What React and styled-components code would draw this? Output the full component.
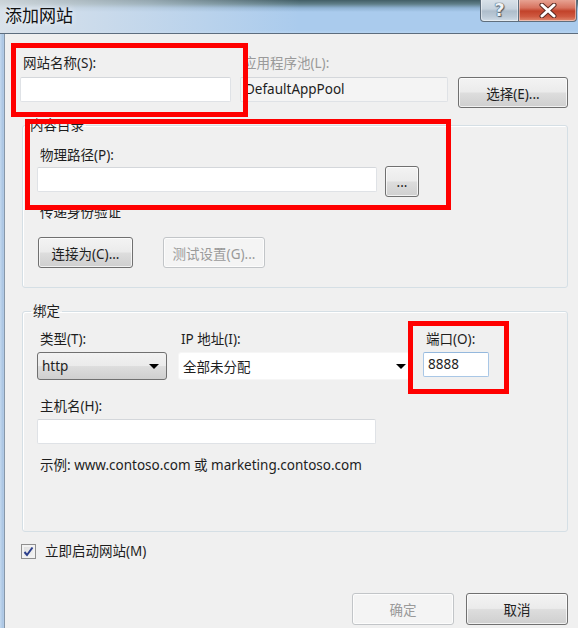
import React from 'react';
import styled, { createGlobalStyle } from 'styled-components';

const GlobalStyle = createGlobalStyle`
  html, body {
    margin: 0;
    padding: 0;
    background: #b4cde8;
    overflow: hidden;
  }
  * { box-sizing: border-box; }
`;

const Window = styled.div`
  position: relative;
  width: 578px;
  height: 628px;
  overflow: hidden;
  background: linear-gradient(90deg, #c3d8ee 0, #a9c4e2 3px, #b9d0ea 4px);
  font-family: "Noto Sans", "Noto Sans CJK SC", sans-serif;
  font-size: 13.5px;
  color: #1e1e1e;
`;

const TitleBar = styled.div`
  height: 34px;
  display: flex;
  align-items: flex-start;
  border-bottom: 1px solid #5d6d7e;
  background:
    linear-gradient(90deg, rgba(226, 230, 234, 0.85) 0, rgba(214, 224, 234, 0.55) 150px, rgba(200, 220, 240, 0) 300px),
    linear-gradient(180deg, #425e66 0, #5f7e88 4px, #8fb2d2 8px, #aacbed 12px, #aacbed 30px, #b6d3f0 33px);
`;

const Title = styled.div`
  font-family: "Noto Sans CJK SC", sans-serif;
  font-size: 17px;
  line-height: 20px;
  padding: 5px 0 0 5px;
  color: #111;
  text-shadow: 0 0 6px rgba(255, 255, 255, 0.9);
`;

const Caption = styled.div`
  margin-left: auto;
  margin-right: 1px;
  display: flex;
`;

const CapButton = styled.div`
  width: ${p => p.$w}px;
  height: 23px;
  margin-top: -1px;
  display: flex;
  align-items: center;
  justify-content: center;
  border: 1px solid #5f6e7d;
  border-top: none;
  border-radius: ${p => (p.$close ? '0 0 4px 0' : '0 0 0 4px')};
  background: ${p =>
    p.$close
      ? 'linear-gradient(180deg, #e9a898 0, #d7735f 40%, #c2422a 55%, #cf5a41 80%, #e08a70 100%)'
      : 'linear-gradient(180deg, #dbe3ea 0, #c6d2dd 45%, #aebdcb 55%, #bccad7 80%, #d0dce7 100%)'};
  box-shadow: inset 0 0 0 1px rgba(255, 255, 255, 0.45);
  & + & { border-left: none; }
`;

const HelpGlyph = styled.span`
  font-family: "DejaVu Sans", sans-serif;
  font-weight: bold;
  font-size: 18px;
  line-height: 1;
  color: #eef2f5;
  text-shadow: 0 0 1px #3b4652, 0 0 1px #3b4652, 1px 1px 1px #55606b;
`;

const Client = styled.div`
  margin-left: 4px;
  height: 594px;
  border-left: 1px solid #8797a8;
  background: #f0f0f0;
  padding: 22px 10px 0 15px;
`;

const Row = styled.div`
  display: flex;
  align-items: ${p => p.$align || 'flex-start'};
  margin-top: ${p => p.$mt || 0}px;
  margin-left: ${p => p.$ml || 0}px;
  gap: ${p => p.$gap || 0}px;
  justify-content: ${p => p.$justify || 'flex-start'};
`;

const Field = styled.div`
  display: flex;
  flex-direction: column;
  width: ${p => p.$w}px;
  margin-left: ${p => p.$ml || 0}px;
`;

const Label = styled.div`
  height: 14px;
  line-height: 14px;
  margin-left: 3px;
  margin-top: ${p => p.$mt || 0}px;
  margin-bottom: ${p => p.$mb || 0}px;
  white-space: nowrap;
  color: ${p => (p.$disabled ? '#9a9a9a' : '#1e1e1e')};
`;

const TextBox = styled.div`
  width: ${p => (p.$w ? `${p.$w}px` : '100%')};
  height: 25px;
  line-height: 23px;
  padding: 0 4px;
  background: ${p => (p.$disabled ? '#f4f4f4' : '#fff')};
  border: 1px solid ${p => (p.$focus ? '#a9c7e6' : '#dfe2e6')};
  border-top-color: ${p => (p.$focus ? '#94b8dd' : '#d4d7db')};
  border-radius: 2px;
  white-space: nowrap;
  overflow: hidden;
`;

const Button = styled.div`
  width: ${p => p.$w}px;
  height: ${p => p.$h || 31}px;
  margin-top: ${p => p.$mt || 0}px;
  margin-left: ${p => p.$ml || 0}px;
  display: flex;
  align-items: center;
  justify-content: center;
  flex-shrink: 0;
  border-radius: 3px;
  border: 1px solid ${p => (p.$disabled ? '#c2c5c8' : '#707070')};
  color: ${p => (p.$disabled ? '#9a9a9a' : '#1e1e1e')};
  background: ${p =>
    p.$disabled
      ? '#f4f4f4'
      : 'linear-gradient(180deg, #f3f3f3 0, #ebebeb 48%, #dddddd 52%, #cfcfcf 100%)'};
  box-shadow: inset 0 0 0 1px rgba(255, 255, 255, 0.7);
  white-space: nowrap;
`;

const Group = styled.fieldset`
  margin: ${p => p.$mt}px 0 0 2px;
  padding: ${p => p.$pt}px 14px ${p => p.$pb}px 14px;
  border: 1px solid #d5dfe5;
  border-radius: 3px;
  box-shadow: inset 1px 1px 0 #fff;
  min-width: 0;
`;

const Legend = styled.legend`
  margin-left: ${p => p.$ml}px;
  padding: 0 2px;
  height: 16px;
  line-height: 16px;
`;

const Select = styled.div`
  position: relative;
  width: ${p => p.$w}px;
  height: 28px;
  display: flex;
  align-items: center;
  padding-left: 4px;
  border-radius: 3px;
  border: 1px solid ${p => (p.$plain ? '#f6f6f6' : '#707070')};
  background: ${p =>
    p.$plain
      ? '#fff'
      : 'linear-gradient(180deg, #f2f2f2 0, #ebebeb 48%, #dddddd 52%, #cfcfcf 100%)'};
  white-space: nowrap;
`;

const Arrow = styled.span`
  position: absolute;
  right: ${p => p.$r}px;
  top: 11px;
  width: 0;
  height: 0;
  border-left: 5px solid transparent;
  border-right: 5px solid transparent;
  border-top: 5px solid #000;
`;

const CheckBox = styled.div`
  width: 15px;
  height: 15px;
  margin-left: 1px;
  border: 1px solid #8f8f8f;
  background: linear-gradient(135deg, #dcdcdc 0, #f4f4f4 100%);
  box-shadow: inset 0 0 0 2px #f2f2f2;
  display: flex;
  align-items: center;
  justify-content: center;
`;

const CheckLabel = styled.span`
  margin-left: 9px;
  line-height: 15px;
`;

const Mark = styled.div`
  position: absolute;
  left: ${p => p.$x}px;
  top: ${p => p.$y}px;
  width: ${p => p.$w}px;
  height: ${p => p.$h}px;
  border: 5px solid #ff0000;
  pointer-events: none;
`;

export default function App() {
  return (
    <Window>
      <GlobalStyle />
      <TitleBar>
        <Title>添加网站</Title>
        <Caption>
          <CapButton $w={39}>
            <HelpGlyph>?</HelpGlyph>
          </CapButton>
          <CapButton $w={58} $close>
            <svg width="18" height="15" viewBox="0 0 18 15">
              <path d="M3 2 L15 13 M15 2 L3 13" stroke="#5b2a22" strokeWidth="5" strokeLinecap="round" />
              <path d="M3 2 L15 13 M15 2 L3 13" stroke="#ffffff" strokeWidth="3" strokeLinecap="round" />
            </svg>
          </CapButton>
        </Caption>
      </TitleBar>

      <Client>
        <Row>
          <Field $w={211}>
            <Label $mb={7}>网站名称(S):</Label>
            <TextBox />
          </Field>
          <Field $w={208} $ml={9}>
            <Label $mb={7} $disabled>应用程序池(L):</Label>
            <TextBox $disabled>DefaultAppPool</TextBox>
          </Field>
          <Button $w={110} $ml={10} $mt={21}>选择(E)...</Button>
        </Row>

        <Group $mt={9} $pt={15} $pb={19}>
          <Legend $ml={-9}>内容目录</Legend>
          <Label $mb={5}>物理路径(P):</Label>
          <Row>
            <TextBox $w={340} />
            <Button $w={34} $h={31} $ml={8} $mt={-1}>...</Button>
          </Row>
          <Label $mt={8}>传递身份验证</Label>
          <Row $mt={18} $ml={1} $gap={30}>
            <Button $w={95}>连接为(C)...</Button>
            <Button $w={102} $disabled>测试设置(G)...</Button>
          </Row>
        </Group>

        <Group $mt={15} $pt={13} $pb={59}>
          <Legend $ml={-6}>绑定</Legend>
          <Row>
            <Field $w={130}>
              <Label $mb={6}>类型(T):</Label>
              <Select $w={130}>
                http
                <Arrow $r={7} />
              </Select>
            </Field>
            <Field $w={232} $ml={11}>
              <Label $mb={6}>IP 地址(I):</Label>
              <Select $w={232} $plain>
                全部未分配
                <Arrow $r={3} />
              </Select>
            </Field>
            <Field $w={66} $ml={13}>
              <Label $mb={6}>端口(O):</Label>
              <TextBox $focus>8888</TextBox>
            </Field>
          </Row>
          <Label $mt={19} $mb={6}>主机名(H):</Label>
          <TextBox $w={339} />
          <Label $mt={14}>示例: www.contoso.com 或 marketing.contoso.com</Label>
        </Group>

        <Row $mt={12} $align="center">
          <CheckBox>
            <svg width="11" height="11" viewBox="0 0 11 11">
              <path d="M1.5 6 L4 9 L9.5 1.5" fill="none" stroke="#2c3f8c" strokeWidth="2" />
            </svg>
          </CheckBox>
          <CheckLabel>立即启动网站(M)</CheckLabel>
        </Row>

        <Row $mt={34} $gap={12} $justify="flex-end">
          <Button $w={102} $h={32} $disabled>确定</Button>
          <Button $w={102} $h={32}>取消</Button>
        </Row>
      </Client>

      <Mark $x={11} $y={43} $w={237} $h={74} />
      <Mark $x={25} $y={119} $w={426} $h={91} />
      <Mark $x={408} $y={321} $w={101} $h={73} />
    </Window>
  );
}
